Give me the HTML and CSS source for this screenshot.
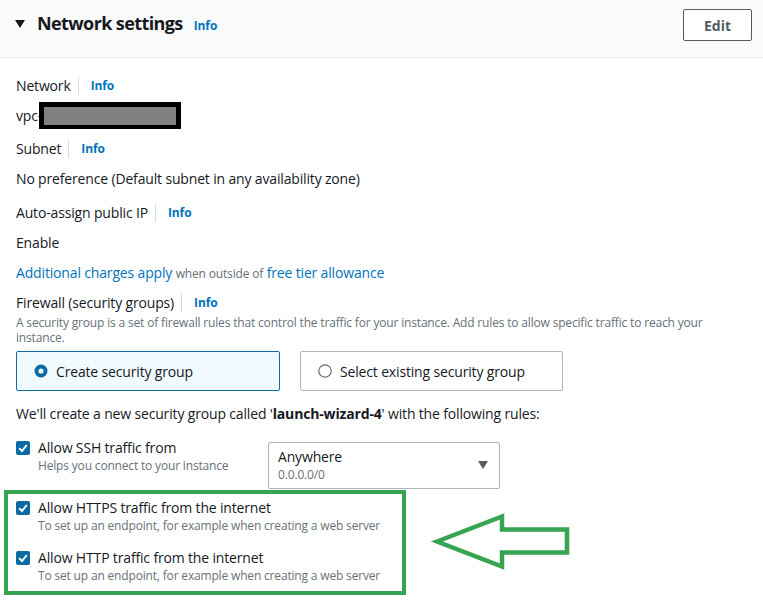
FILE: index.html
```html
<!DOCTYPE html>
<html>
<head>
<meta charset="utf-8">
<link rel="stylesheet" href="styles.css">
</head>
<body>
<div class="panel">
  <header class="hdr">
    <div class="hdr-title">
      <span class="caret"></span>
      <h2 class="title">Network settings</h2>
      <a class="info info-title">Info</a>
    </div>
    <button class="btn">Edit</button>
  </header>

  <div class="content">
    <div class="label first"><span>Network</span><a class="info info-div">Info</a></div>
    <div class="vpc">vpc-<span class="redact"><span class="redact-fill"></span></span></div>

    <div class="label gap9"><span>Subnet</span><a class="info info-div">Info</a></div>
    <div class="value gap9">No preference (Default subnet in any availability zone)</div>

    <div class="label gap13"><span>Auto-assign public IP</span><a class="info info-div">Info</a></div>
    <div class="value gap9">Enable</div>
    <div class="value gap10"><a class="link">Additional charges apply</a> <span class="small-muted">when outside of</span> <a class="link">free tier allowance</a></div>

    <div class="label gap8"><span>Firewall (security groups)</span><a class="info info-div">Info</a></div>
    <p class="desc">A security group is a set of firewall rules that control the traffic for your instance. Add rules to allow specific traffic to reach your instance.</p>

    <div class="tiles">
      <div class="tile tile-on">
        <svg class="radio" width="14" height="14" viewBox="0 0 14 14"><circle cx="7" cy="7" r="6.5" fill="#0b6aa2"/><circle cx="7" cy="7" r="2.6" fill="#e8f6ff"/></svg>
        <span>Create security group</span>
      </div>
      <div class="tile">
        <svg class="radio" width="14" height="14" viewBox="0 0 14 14"><circle cx="7" cy="7" r="6.2" fill="#fff" stroke="#687078" stroke-width="1.2"/></svg>
        <span>Select existing security group</span>
      </div>
    </div>

    <p class="note">We'll create a new security group called '<b>launch-wizard-4</b>' with the following rules:</p>

    <div class="ssh">
      <div class="rule ssh-left">
        <span class="cb"><svg width="14" height="14" viewBox="0 0 14 14"><rect width="14" height="14" rx="2" fill="#0b6aa2"/><path d="M3.2 7.2 L6 10 L10.8 4" fill="none" stroke="#fff" stroke-width="2"/></svg></span>
        <div class="rule-text">
          <div class="rule-label">Allow SSH traffic from</div>
          <div class="rule-desc">Helps you connect to your instance</div>
        </div>
      </div>
      <div class="select">
        <div class="sel-text">
          <div class="sel-main">Anywhere</div>
          <div class="sel-sub">0.0.0.0/0</div>
        </div>
        <span class="sel-caret"></span>
      </div>
    </div>

    <div class="highlight">
      <div class="rule">
        <span class="cb"><svg width="14" height="14" viewBox="0 0 14 14"><rect width="14" height="14" rx="2" fill="#0b6aa2"/><path d="M3.2 7.2 L6 10 L10.8 4" fill="none" stroke="#fff" stroke-width="2"/></svg></span>
        <div class="rule-text">
          <div class="rule-label">Allow HTTPS traffic from the internet</div>
          <div class="rule-desc">To set up an endpoint, for example when creating a web server</div>
        </div>
      </div>
      <div class="rule rule-gap">
        <span class="cb"><svg width="14" height="14" viewBox="0 0 14 14"><rect width="14" height="14" rx="2" fill="#0b6aa2"/><path d="M3.2 7.2 L6 10 L10.8 4" fill="none" stroke="#fff" stroke-width="2"/></svg></span>
        <div class="rule-text">
          <div class="rule-label">Allow HTTP traffic from the internet</div>
          <div class="rule-desc">To set up an endpoint, for example when creating a web server</div>
        </div>
      </div>
    </div>
  </div>

  <svg class="arrow" width="763" height="603" viewBox="0 0 763 603">
    <polygon points="437,541.5 502,516.5 502,529.5 567,529.5 567,552.5 502,552.5 502,566.5" fill="none" stroke="#37a452" stroke-width="4.5" stroke-linejoin="miter"/>
  </svg>
</div>
</body>
</html>
```

FILE: styles.css
```css
* { box-sizing: border-box; }
html, body { margin: 0; padding: 0; background: #fff; }
body {
  font-family: "Open Sans", "Noto Sans", sans-serif;
  font-size: 14px;
  letter-spacing: -0.16px;
  color: #16191f;
  width: 763px;
  height: 603px;
  overflow: hidden;
}
.panel { position: relative; width: 763px; height: 603px; }

.hdr {
  height: 58px;
  background: #fafafa;
  border-bottom: 1px solid #eaeded;
  display: flex;
  justify-content: space-between;
  align-items: flex-start;
  padding: 9px 11px 0 15px;
}
.hdr-title { display: flex; align-items: center; height: 28px; }
.caret {
  width: 0; height: 0;
  border-left: 5px solid transparent;
  border-right: 5px solid transparent;
  border-top: 8px solid #16191f;
  margin-right: 12px;
  margin-top: 1px;
}
.title {
  margin: 0;
  font-size: 18px;
  font-weight: 700;
  line-height: 28px;
  letter-spacing: -0.6px;
}
.info {
  color: #0073bb;
  font-size: 12px;
  font-weight: 700;
  letter-spacing: -0.1px;
  text-decoration: none;
}
.info-title { margin-left: 11px; margin-top: 4px; }
.btn {
  width: 69px;
  height: 32px;
  border: 1px solid #545b64;
  border-radius: 2px;
  background: #fff;
  color: #545b64;
  font-family: inherit;
  font-size: 14px;
  font-weight: 700;
  padding: 0;
}

.content { padding: 17px 16px 0 16px; }
.label { display: flex; align-items: center; height: 22px; line-height: 22px; }
.info-div {
  margin-left: 7px;
  padding-left: 12px;
  border-left: 1px solid #d5dbdb;
  line-height: 18px;
}
.gap8 { margin-top: 8px; }
.gap9 { margin-top: 9px; }
.gap10 { margin-top: 10px; }
.gap13 { margin-top: 13px; }
.value { line-height: 20px; }
.vpc { display: flex; align-items: center; height: 27px; margin-top: 5px; }
.redact {
  display: inline-block;
  width: 142px;
  height: 27px;
  background: #000;
  margin-left: -3px;
  padding: 5px 5px 4px 5px;
}
.redact-fill { display: block; width: 100%; height: 100%; background: #808080; }
.link { color: #0073bb; text-decoration: none; }
.small-muted { color: #687078; font-size: 12px; }
.desc {
  margin: 1px 0 0 0;
  font-size: 12px;
  line-height: 15px;
  letter-spacing: -0.17px;
  color: #687078;
}
.tiles { display: flex; gap: 20px; margin-top: 6px; }
.tile {
  width: 264px;
  height: 40px;
  border: 1px solid #aab7b8;
  border-radius: 2px;
  display: flex;
  align-items: center;
  padding-left: 17px;
  background: #fff;
}
.tile + .tile { width: 263px; }
.tile-on { background: #f1faff; border-color: #0b6aa2; }
.radio { margin-right: 8px; flex: none; }
.note { margin: 13px 0 0 0; line-height: 20px; }

.ssh { display: flex; margin-top: 14px; align-items: flex-start; }
.ssh-left { width: 252px; }
.rule { display: flex; align-items: flex-start; }
.cb { width: 14px; height: 14px; margin-top: 3px; margin-right: 8px; flex: none; display: block; }
.cb svg { display: block; }
.rule-label { line-height: 20px; }
.rule-desc { font-size: 12px; line-height: 16px; letter-spacing: -0.17px; color: #687078; }
.select {
  width: 232px;
  height: 47px;
  margin-top: 4px;
  border: 1px solid #aab7b8;
  border-radius: 2px;
  display: flex;
  justify-content: space-between;
  align-items: flex-start;
  padding: 4px 11px 0 9px;
}
.sel-main { line-height: 20px; }
.sel-sub { font-size: 12px; line-height: 16px; color: #687078; }
.sel-caret {
  width: 0; height: 0;
  border-left: 5px solid transparent;
  border-right: 5px solid transparent;
  border-top: 8px solid #545b64;
  margin-top: 14px;
}

.highlight {
  margin-top: 1px;
  margin-left: -12px;
  width: 402px;
  border: 4px solid #37a452;
  padding: 4px 0 7px 8px;
}
.rule-gap { margin-top: 14px; }

.arrow { position: absolute; left: 0; top: 0; pointer-events: none; }
```
